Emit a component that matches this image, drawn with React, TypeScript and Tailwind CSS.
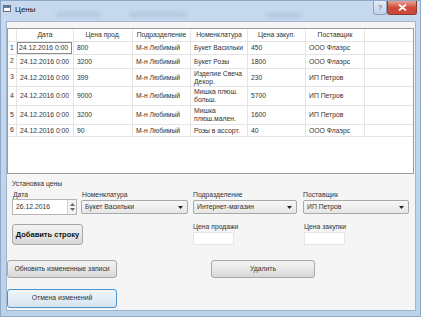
import React from "react";

const FONT = { fontFamily: '"Liberation Sans", Arial, sans-serif' };

type Row = { n: number; h: string; price: string; dep: string; nom: React.ReactNode; buy: string; sup: string };

const rows: Row[] = [
  { n: 1, h: "h-[13px]", price: "800", dep: "М-н Любимый", nom: "Букет Васильки", buy: "450", sup: "ООО Флаэрс" },
  { n: 2, h: "h-[14px]", price: "3200", dep: "М-н Любимый", nom: "Букет Розы", buy: "1800", sup: "ООО Флаэрс" },
  { n: 3, h: "h-[18px]", price: "399", dep: "М-н Любимый", nom: <>Изделие Свеча<br />Декор.</>, buy: "230", sup: "ИП Петров" },
  { n: 4, h: "h-[19px]", price: "9000", dep: "М-н Любимый", nom: <>Мишка плюш.<br />больш.</>, buy: "5700", sup: "ИП Петров" },
  { n: 5, h: "h-[19px]", price: "3200", dep: "М-н Любимый", nom: <>Мишка<br />плюш.мален.</>, buy: "1600", sup: "ИП Петров" },
  { n: 6, h: "h-[12px]", price: "90", dep: "М-н Любимый", nom: "Розы в ассорт.", buy: "40", sup: "ООО Флаэрс" },
];

function Cell({ w, children, className = "" }: { w: string; children?: React.ReactNode; className?: string }) {
  return (
    <div className={`${w} h-full border-r border-[#e4e4e4] flex items-center pl-[3px] leading-[8px] ${className}`}>
      {children}
    </div>
  );
}

function Combo({ w, text }: { w: string; text: string }) {
  return (
    <div className={`${w} h-[14px] mt-[1px] border border-[#a9a9a9] rounded-[2px] bg-gradient-to-b from-[#f7f7f7] to-[#e6e6e6] flex items-center justify-between pl-[3px] pr-[4px]`}>
      <span>{text}</span>
      <svg width="5" height="3" viewBox="0 0 5 3"><path d="M0 0h5L2.5 3z" fill="#222" /></svg>
    </div>
  );
}

function Btn({ w, h, children, def = false, bold = false }: { w: string; h: string; children: React.ReactNode; def?: boolean; bold?: boolean }) {
  return (
    <div
      className={`${w} ${h} rounded-[3px] border flex items-center justify-center ${
        def
          ? "border-[#4d94cc] bg-gradient-to-b from-[#eef6fc] via-[#e4eef6] to-[#d3e2ee]"
          : "border-[#a8a8a8] bg-gradient-to-b from-[#f3f3f3] via-[#e8e8e8] to-[#d6d6d6]"
      } ${bold ? "font-bold text-[7.5px] text-[#111]" : ""}`}
    >
      {children}
    </div>
  );
}

export default function App() {
  return (
    <div className="w-[421px] h-[317px] overflow-hidden flex flex-col bg-gradient-to-b from-[#c6d9ef] to-[#bcd2ea] border border-[#8ea8c8] text-[6.8px] text-[#333]" style={FONT}>
      {/* title bar */}
      <div className="relative h-[20px] flex items-start shrink-0">
        <div className="absolute left-[55px] top-[11px] w-[45px] h-[5px] rounded-full bg-[#9fb4cc] opacity-50 blur-[2px]" />
        <div className="absolute left-[128px] top-[11px] w-[58px] h-[5px] rounded-full bg-[#9fb4cc] opacity-50 blur-[2px]" />
        <div className="absolute left-[265px] top-[12px] w-[36px] h-[5px] rounded-full bg-[#9fb4cc] opacity-50 blur-[2px]" />
        <div className="ml-[2px] mt-[4px] w-[8px] h-[7px] bg-white border border-[#6b6b6b] flex items-start">
          <div className="w-full h-[2px] bg-[#5b7fb0]" />
        </div>
        <div className="ml-[4px] mt-[4px] text-[8px] leading-[10px] text-[#1a1a1a]">Цены</div>
        <div className="flex-1" />
        <div className="w-[14px] h-[14px] rounded-b-[3px] border border-t-0 border-[#8aa0bb] bg-gradient-to-b from-[#e3ecf7] to-[#c2d3e8] flex items-center justify-center text-[7px] text-[#555] leading-none">?</div>
        <div className="w-[30px] h-[14px] mr-[3px] rounded-b-[3px] border border-t-0 border-[#8b3b33] bg-gradient-to-b from-[#e9a195] via-[#cf4b3a] to-[#c8483a] flex items-center justify-center">
          <svg width="9" height="7" viewBox="0 0 9 7"><path d="M1 0.5l7 6M8 0.5l-7 6" stroke="#fff" strokeWidth="1.8" /></svg>
        </div>
      </div>

      {/* client */}
      <div className="flex-1 flex pl-[5px] pr-[4px] pb-[5px]">
        <div className="flex-1 bg-[#f5f5f5] border border-[#9fb5cf] flex flex-col">
          {/* table */}
          <div className="mt-[6px] ml-[0px] mr-[1px] h-[146px] border border-[#9c9c9c] bg-white flex flex-col">
            <div className="h-[13px] flex border-b border-[#e4e4e4] shrink-0">
              <div className="w-[9px] h-full border-r border-[#e4e4e4]" />
              {[
                ["w-[57px]", "Дата"],
                ["w-[59px]", "Цена прод."],
                ["w-[58px]", "Подразделение"],
                ["w-[57px]", "Номенклатура"],
                ["w-[58px]", "Цена закуп."],
                ["w-[59px]", "Поставщик"],
              ].map(([w, t]) => (
                <div key={t} className={`${w} h-full border-r border-[#e4e4e4] flex items-center justify-center`}>{t}</div>
              ))}
            </div>
            {rows.map((r) => (
              <div key={r.n} className={`${r.h} flex border-b border-[#e4e4e4] shrink-0`}>
                <div className="w-[9px] h-full border-r border-[#e4e4e4] flex items-center pl-[2px]">{r.n}</div>
                {r.n === 1 ? (
                  <div className="w-[57px] h-full border-r border-[#e4e4e4] flex items-center pr-[1px]">
                    <div className="w-full h-[12px] border border-[#8c8c8c] flex items-center pl-[1px]">24.12.2016 0:00</div>
                  </div>
                ) : (
                  <Cell w="w-[57px]" className="pl-[1px]">24.12.2016 0:00</Cell>
                )}
                <Cell w="w-[59px]">{r.price}</Cell>
                <Cell w="w-[58px]">{r.dep}</Cell>
                <Cell w="w-[57px]">{r.nom}</Cell>
                <Cell w="w-[58px]">{r.buy}</Cell>
                <Cell w="w-[59px]">{r.sup}</Cell>
              </div>
            ))}
          </div>

          {/* price setup group */}
          <div className="pl-[5px] flex flex-col">
            <div className="mt-[5px] h-[9px] leading-[9px]">Установка цены</div>
            <div className="mt-[2px] h-[9px] leading-[9px] grid grid-cols-[69px_112px_110px_106px]">
              <div className="pl-[1px]">Дата</div>
              <div className="pl-[1px]">Номенклатура</div>
              <div>Подразделение</div>
              <div>Поставщик</div>
            </div>
            <div className="h-[16px] grid grid-cols-[69px_112px_110px_106px]">
              <div className="w-[65px] h-[16px] border border-[#b5b5b5] bg-white flex items-center">
                <span className="flex-1 pl-[3px]">26.12.2016</span>
                <div className="w-[9px] h-full border-l border-[#d0d0d0] flex flex-col items-center justify-center gap-[2px] bg-[#f3f3f3]">
                  <svg width="5" height="3" viewBox="0 0 5 3"><path d="M0 3h5L2.5 0z" fill="#666" /></svg>
                  <svg width="5" height="3" viewBox="0 0 5 3"><path d="M0 0h5L2.5 3z" fill="#666" /></svg>
                </div>
              </div>
              <Combo w="w-[107px]" text="Букет Васильки" />
              <Combo w="w-[104px]" text="Интернет-магазин" />
              <Combo w="w-[106px]" text="ИП Петров" />
            </div>
            <div className="mt-[8px] h-[22px] grid grid-cols-[69px_112px_110px_106px]">
              <div className="pt-[1px]">
                <Btn w="w-[71px]" h="h-[21px]" bold>Добавить строку</Btn>
              </div>
              <div />
              <div className="flex flex-col">
                <div className="h-[8px] leading-[8px]">Цена продажи</div>
                <div className="mt-[1px] w-[41px] h-[13px] bg-white border border-[#e6e6e6]" />
              </div>
              <div className="flex flex-col pl-[1px]">
                <div className="h-[8px] leading-[8px]">Цена закупки</div>
                <div className="mt-[1px] w-[41px] h-[13px] bg-white border border-[#e6e6e6]" />
              </div>
            </div>
          </div>

          {/* buttons */}
          <div className="mt-[15px] ml-[0px] flex">
            <Btn w="w-[110px]" h="h-[18px]">Обновить измененные записи</Btn>
            <div className="ml-[94px]">
              <Btn w="w-[104px]" h="h-[18px]">Удалить</Btn>
            </div>
          </div>
          <div className="mt-[11px] ml-[0px] flex">
            <Btn w="w-[110px]" h="h-[19px]" def>Отмена изменений</Btn>
          </div>
        </div>
      </div>
    </div>
  );
}
